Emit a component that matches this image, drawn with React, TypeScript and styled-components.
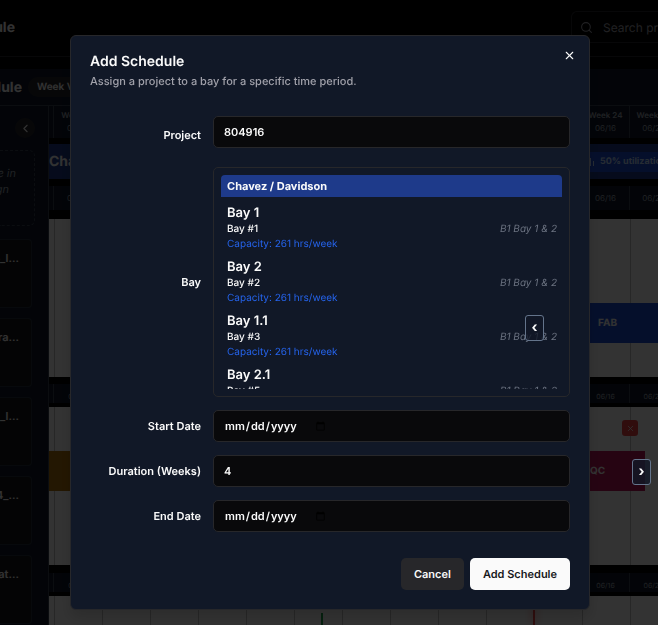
import React from "react";
import styled, { createGlobalStyle } from "styled-components";
import { ChevronLeft, Search, X } from "lucide-react";

const GlobalStyle = createGlobalStyle`
  * { box-sizing: border-box; }
  body {
    margin: 0;
    background: #000;
    color: #fafafa;
    font-family: Inter, "Liberation Sans", sans-serif;
    font-size: 12px;
    text-rendering: geometricPrecision;
    overflow: hidden;
  }
  button, input { font: inherit; color: inherit; text-rendering: inherit; }
  h1, h2, p { margin: 0; }
`;

/* ---------- page behind the dialog ---------- */

const Page = styled.div`
  position: relative;
  display: flex;
  flex-direction: column;
  height: 100vh;
  overflow: hidden;
`;

const TopBar = styled.header`
  display: flex;
  align-items: center;
  justify-content: space-between;
  height: 57px;
  padding-bottom: 2px;
  border-bottom: 1px solid #27272a;
  flex-shrink: 0;
`;

const CutLeft = styled.div<{ $width: number }>`
  display: flex;
  align-items: center;
  justify-content: flex-end;
  width: ${(p) => p.$width}px;
  overflow: hidden;
  white-space: nowrap;
  flex-shrink: 0;
`;

const PageTitle = styled.h1`
  font-size: 14px;
  font-weight: 700;
`;

const SearchBox = styled.label`
  display: flex;
  align-items: center;
  gap: 10px;
  width: 87px;
  height: 32px;
  padding-left: 8px;
  border: 1px solid #27272a;
  border-right: 0;
  border-radius: 6px 0 0 6px;
  color: #a1a1aa;
  overflow: hidden;
  svg { flex-shrink: 0; }
`;

const SearchInput = styled.input`
  min-width: 0;
  width: 100%;
  padding: 0;
  border: 0;
  background: none;
  outline: none;
  &::placeholder { color: #a1a1aa; opacity: 1; }
`;

const Toolbar = styled.div`
  display: flex;
  align-items: center;
  gap: 6px;
  height: 37px;
  margin-top: 12px;
  background: #0f172a;
  border-bottom: 1px solid #374151;
  flex-shrink: 0;
`;

const ViewPill = styled.button`
  height: 20px;
  padding: 0 9px;
  border: 0;
  border-radius: 10px;
  background: #27272a;
  font-size: 10px;
  font-weight: 600;
  white-space: nowrap;
`;

const Body = styled.div`
  display: flex;
  flex: 1;
  min-height: 0;
`;

const Sidebar = styled.aside`
  width: 49px;
  flex-shrink: 0;
  display: flex;
  flex-direction: column;
  background: #0f172a;
  border-right: 1px solid #374151;
  overflow: hidden;
`;

const CollapseButton = styled.button`
  align-self: flex-end;
  display: grid;
  place-items: center;
  width: 20px;
  height: 20px;
  margin: 12px 13px 12px 0;
  padding: 0;
  border: 0;
  border-radius: 50%;
  background: #27272a;
`;

const DropHint = styled.div`
  display: flex;
  flex-direction: column;
  align-items: flex-end;
  width: 35px;
  height: 76px;
  padding: 14px 18px 0 0;
  border: 1px dashed #374151;
  border-left: 0;
  border-radius: 0 6px 6px 0;
  color: #9ca3af;
  font-size: 11px;
  line-height: 16px;
  font-style: italic;
  white-space: nowrap;
`;

const HintEnd = styled.span`
  padding-right: 7px;
`;

const CardList = styled.div`
  display: flex;
  flex-direction: column;
  gap: 10px;
  width: 32px;
  margin-top: 13px;
`;

const ProjectCard = styled.div`
  display: flex;
  justify-content: flex-end;
  height: 69px;
  padding: 10px 12px 0 0;
  border: 1px solid #27303f;
  border-left: 0;
  border-radius: 0 4px 4px 0;
  background: #18181b;
  font-size: 11px;
  font-weight: 600;
  line-height: 16px;
  white-space: nowrap;
  flex-shrink: 0;
`;

const Timeline = styled.main`
  flex: 1;
  min-width: 0;
  overflow: hidden;
`;

const CellRow = styled.div<{ $height: number; $gapAfter: number }>`
  display: flex;
  height: ${(p) => p.$height}px;
  padding-left: 4px;
  margin-bottom: ${(p) => p.$gapAfter}px;
  background: #0f172a;
`;

const Cell = styled.div<{ $small?: boolean }>`
  display: flex;
  flex-direction: column;
  align-items: center;
  justify-content: center;
  width: 48px;
  flex-shrink: 0;
  border-left: 1px solid #374151;
  color: #9ca3af;
  font-size: ${(p) => (p.$small ? 7 : 8)}px;
  line-height: 13px;
  padding-top: ${(p) => (p.$small ? 5 : 0)}px;
  white-space: nowrap;
  strong { font-weight: 600; }
`;

const TeamBand = styled.div`
  display: flex;
  align-items: center;
  justify-content: space-between;
  height: 35px;
  margin-bottom: 7px;
  background: #1e3a8a;
  font-size: 14px;
  font-weight: 700;
`;

const Utilization = styled.div`
  display: flex;
  align-items: center;
  gap: 5px;
  width: 78px;
  height: 20px;
  padding-left: 9px;
  background: #1d4ed8;
  color: #bfdbfe;
  font-size: 9px;
  font-weight: 700;
  white-space: nowrap;
  overflow: hidden;
  svg { flex-shrink: 0; }
`;

const Lane = styled.section<{ $height: number; $gapAfter: number; $top: number }>`
  display: flex;
  align-items: flex-start;
  justify-content: space-between;
  height: ${(p) => p.$height}px;
  padding-top: ${(p) => p.$top}px;
  margin-bottom: ${(p) => p.$gapAfter}px;
  background: repeating-linear-gradient(to right, #fff 0 47px, #c4c4c4 47px 48px) -42px 0 / 2400px 100%;
`;

const Phase = styled.div<{ $color: string; $width: number; $inset?: number }>`
  display: flex;
  align-items: center;
  width: ${(p) => p.$width}px;
  height: 40px;
  margin-left: auto;
  padding-left: ${(p) => p.$inset ?? 0}px;
  background: ${(p) => p.$color};
  font-size: 10px;
  font-weight: 700;
`;

const PhaseStart = styled(Phase)`
  align-self: flex-end;
  margin-left: 0;
`;

const PhaseRow = styled.div`
  display: flex;
  justify-content: space-between;
  width: 100%;
`;

const PhaseGroup = styled.div`
  display: flex;
  flex-direction: column;
  align-items: flex-end;
  gap: 15px;
  padding-right: 13px;
`;

const RemoveButton = styled.button`
  display: grid;
  place-items: center;
  width: 16px;
  height: 16px;
  margin-right: 7px;
  padding: 0;
  border: 0;
  border-radius: 3px;
  background: #ef4444;
`;

const Marker = styled.i<{ $color: string; $left: number; $top: number; $glow?: boolean }>`
  position: absolute;
  left: ${(p) => p.$left}px;
  top: ${(p) => p.$top}px;
  bottom: 0;
  width: 2px;
  background: ${(p) => p.$color};
  box-shadow: ${(p) => (p.$glow ? `0 0 8px ${p.$color}` : "none")};
`;

/* ---------- dialog ---------- */

const Overlay = styled.div`
  position: fixed;
  inset: 0;
  padding: 35px 68px 16px 70px;
  background: rgba(0, 0, 0, 0.8);
`;

const Dialog = styled.form`
  position: relative;
  max-width: 640px;
  margin: 0 auto;
  padding: 19px;
  border: 1px solid #27272a;
  border-radius: 6px;
  background: #111827;
  box-shadow: 0 8px 14px rgba(0, 0, 0, 0.15);
`;

const DialogTitle = styled.h2`
  font-size: 14px;
  line-height: 14px;
  font-weight: 600;
`;

const DialogText = styled.p`
  margin-top: 4px;
  margin-bottom: 26px;
  color: #a1a1aa;
  font-size: 11px;
  font-weight: 500;
  line-height: 17px;
`;

const CloseButton = styled.button`
  position: absolute;
  top: 11px;
  right: 12px;
  display: grid;
  place-items: center;
  width: 16px;
  height: 16px;
  padding: 0;
  border: 0;
  background: none;
`;

const Fields = styled.div`
  display: grid;
  grid-template-columns: 111px minmax(0, 1fr);
  gap: 13px 12px;
  align-items: center;
`;

const FieldLabel = styled.label`
  text-align: right;
  font-size: 11px;
  line-height: 16px;
  font-weight: 600;
`;

const ProjectSlot = styled.div`
  padding-bottom: 6px;
`;

const Field = styled.input`
  display: flex;
  align-items: center;
  width: 100%;
  height: 32px;
  padding: 0 10px;
  border: 1px solid #27272a;
  border-radius: 5px;
  background: #09090b;
  font-size: 11px;
  font-weight: 600;
  outline: none;
`;

const BayBox = styled.div`
  height: 230px;
  padding: 7px;
  border: 1px solid #27272a;
  border-radius: 5px;
`;

const BayScroll = styled.div`
  height: 100%;
  overflow: hidden;
`;

const BayGroup = styled.div`
  height: 22px;
  padding: 0 6px;
  margin-bottom: 7px;
  border-radius: 4px 4px 0 0;
  background: #1e3a8a;
  font-size: 11px;
  line-height: 22px;
  font-weight: 700;
`;

const BayOption = styled.button`
  display: block;
  width: 100%;
  height: 48px;
  margin-bottom: 6px;
  padding: 0 5px 0 6px;
  border: 0;
  background: none;
  text-align: left;
`;

const BayName = styled.span`
  display: block;
  font-size: 13px;
  line-height: 18px;
  font-weight: 600;
`;

const BayLine = styled.span`
  display: flex;
  justify-content: space-between;
  font-size: 10px;
  line-height: 14px;
  font-weight: 500;
  em { color: #6b7280; font-weight: 400; }
`;

const BayCapacity = styled.span`
  display: block;
  color: #2563eb;
  font-size: 10px;
  line-height: 16px;
`;

const Actions = styled.footer`
  display: flex;
  justify-content: flex-end;
  gap: 6px;
  margin-top: 26px;
`;

const ActionButton = styled.button<{ $primary?: boolean }>`
  height: 32px;
  padding: 0 13px;
  border: 0;
  border-radius: 5px;
  background: ${(p) => (p.$primary ? "#fafafa" : "#27272a")};
  color: ${(p) => (p.$primary ? "#18181b" : "#fafafa")};
  font-size: 11px;
  font-weight: 600;
`;

const ScrollButton = styled.button<{ $left: number; $top: number }>`
  position: fixed;
  left: ${(p) => p.$left}px;
  top: ${(p) => p.$top}px;
  width: 19px;
  height: 26px;
  padding: 0;
  border: 1px solid #64748b;
  border-radius: 3px;
  background: rgba(17, 24, 39, 0.8);
  font-size: 14px;
  line-height: 22px;
  font-weight: 700;
  text-align: center;
`;

const weeks = [
  "03/31", "04/07", "04/14", "04/21", "04/28", "05/05", "05/12",
  "05/19", "05/26", "06/02", "06/09", "06/16", "06/23",
];

const bays = [
  { name: "Bay 1", id: "Bay #1" },
  { name: "Bay 2", id: "Bay #2" },
  { name: "Bay 1.1", id: "Bay #3" },
  { name: "Bay 2.1", id: "Bay #5" },
];

const cards = ["804205_l...", "Libra...", "804711_l...", "8044_...", "Flat..."];

function DateCells({ height, gapAfter, small }: { height: number; gapAfter: number; small?: boolean }) {
  return (
    <CellRow $height={height} $gapAfter={gapAfter}>
      {weeks.map((date) => (
        <Cell key={date} $small={small}>{date}</Cell>
      ))}
    </CellRow>
  );
}

function Backdrop() {
  return (
    <Page>
      <TopBar>
        <CutLeft $width={15}>
          <PageTitle>Schedule</PageTitle>
        </CutLeft>
        <SearchBox>
          <Search size={13} />
          <SearchInput placeholder="Search projects..." aria-label="Search projects" />
        </SearchBox>
      </TopBar>
      <Toolbar>
        <CutLeft $width={22}>
          <PageTitle as="h2">Bay Schedule</PageTitle>
        </CutLeft>
        <ViewPill>Week View</ViewPill>
      </Toolbar>
      <Body>
        <Sidebar>
          <CollapseButton aria-label="Collapse sidebar">
            <ChevronLeft size={13} />
          </CollapseButton>
          <DropHint>
            <span>Drop here in</span>
            <HintEnd>to unassign</HintEnd>
          </DropHint>
          <CardList>
            {cards.map((card) => (
              <ProjectCard key={card}>{card}</ProjectCard>
            ))}
          </CardList>
        </Sidebar>
        <Timeline>
          <CellRow $height={32} $gapAfter={6}>
            {weeks.map((date, i) => (
              <Cell key={date}>
                <strong>Week {13 + i}</strong>
                <span>{date}</span>
              </Cell>
            ))}
          </CellRow>
          <TeamBand>
            <span>Chavez</span>
            <Utilization>
              <svg width="6" height="10" viewBox="0 0 6 10" fill="none" stroke="currentColor">
                <path d="M1.5 1v8M4.5 4v5" />
              </svg>
              50% utilization
            </Utilization>
          </TeamBand>
          <DateCells height={24} gapAfter={9} />
          <Lane $height={158} $gapAfter={7} $top={84}>
            <Phase $color="#1d4ed8" $width={80} $inset={20}>FAB</Phase>
          </Lane>
          <DateCells height={19} gapAfter={4} small />
          <Lane $height={158} $gapAfter={8} $top={13}>
            <PhaseRow>
              <PhaseStart $color="#b0720a" $width={60} />
              <PhaseGroup>
                <RemoveButton aria-label="Remove schedule">
                  <X size={9} />
                </RemoveButton>
                <Phase $color="#be185d" $width={75} $inset={20}>QC</Phase>
              </PhaseGroup>
            </PhaseRow>
          </Lane>
          <DateCells height={19} gapAfter={4} small />
          <Lane $height={158} $gapAfter={0} $top={0} />
        </Timeline>
      </Body>
      <Marker $color="#16a34a" $left={321} $top={613} />
      <Marker $color="#ef4444" $left={533} $top={596} $glow />
    </Page>
  );
}

export default function App() {
  return (
    <>
      <GlobalStyle />
      <Backdrop />
      <Overlay>
        <Dialog role="dialog" aria-labelledby="dialog-title" onSubmit={(e) => e.preventDefault()}>
          <DialogTitle id="dialog-title">Add Schedule</DialogTitle>
          <DialogText>Assign a project to a bay for a specific time period.</DialogText>
          <CloseButton type="button" aria-label="Close">
            <X size={13} />
          </CloseButton>
          <Fields>
            <FieldLabel htmlFor="project">Project</FieldLabel>
            <ProjectSlot>
              <Field id="project" type="text" defaultValue="804916" />
            </ProjectSlot>
            <FieldLabel as="span" id="bay-label">Bay</FieldLabel>
            <BayBox role="group" aria-labelledby="bay-label">
              <BayScroll>
                <BayGroup>Chavez / Davidson</BayGroup>
                {bays.map((bay) => (
                  <BayOption key={bay.id} type="button">
                    <BayName>{bay.name}</BayName>
                    <BayLine>
                      {bay.id}
                      <em>B1 Bay 1 &amp; 2</em>
                    </BayLine>
                    <BayCapacity>Capacity: 261 hrs/week</BayCapacity>
                  </BayOption>
                ))}
              </BayScroll>
            </BayBox>
            <FieldLabel htmlFor="start">Start Date</FieldLabel>
            <Field id="start" type="date" />
            <FieldLabel htmlFor="duration">Duration (Weeks)</FieldLabel>
            <Field id="duration" type="number" defaultValue={4} />
            <FieldLabel htmlFor="end">End Date</FieldLabel>
            <Field id="end" type="date" />
          </Fields>
          <Actions>
            <ActionButton type="button">Cancel</ActionButton>
            <ActionButton type="submit" $primary>Add Schedule</ActionButton>
          </Actions>
        </Dialog>
      </Overlay>
      <ScrollButton $left={525} $top={315} aria-label="Scroll left">‹</ScrollButton>
      <ScrollButton $left={632} $top={459} aria-label="Scroll right">›</ScrollButton>
    </>
  );
}
